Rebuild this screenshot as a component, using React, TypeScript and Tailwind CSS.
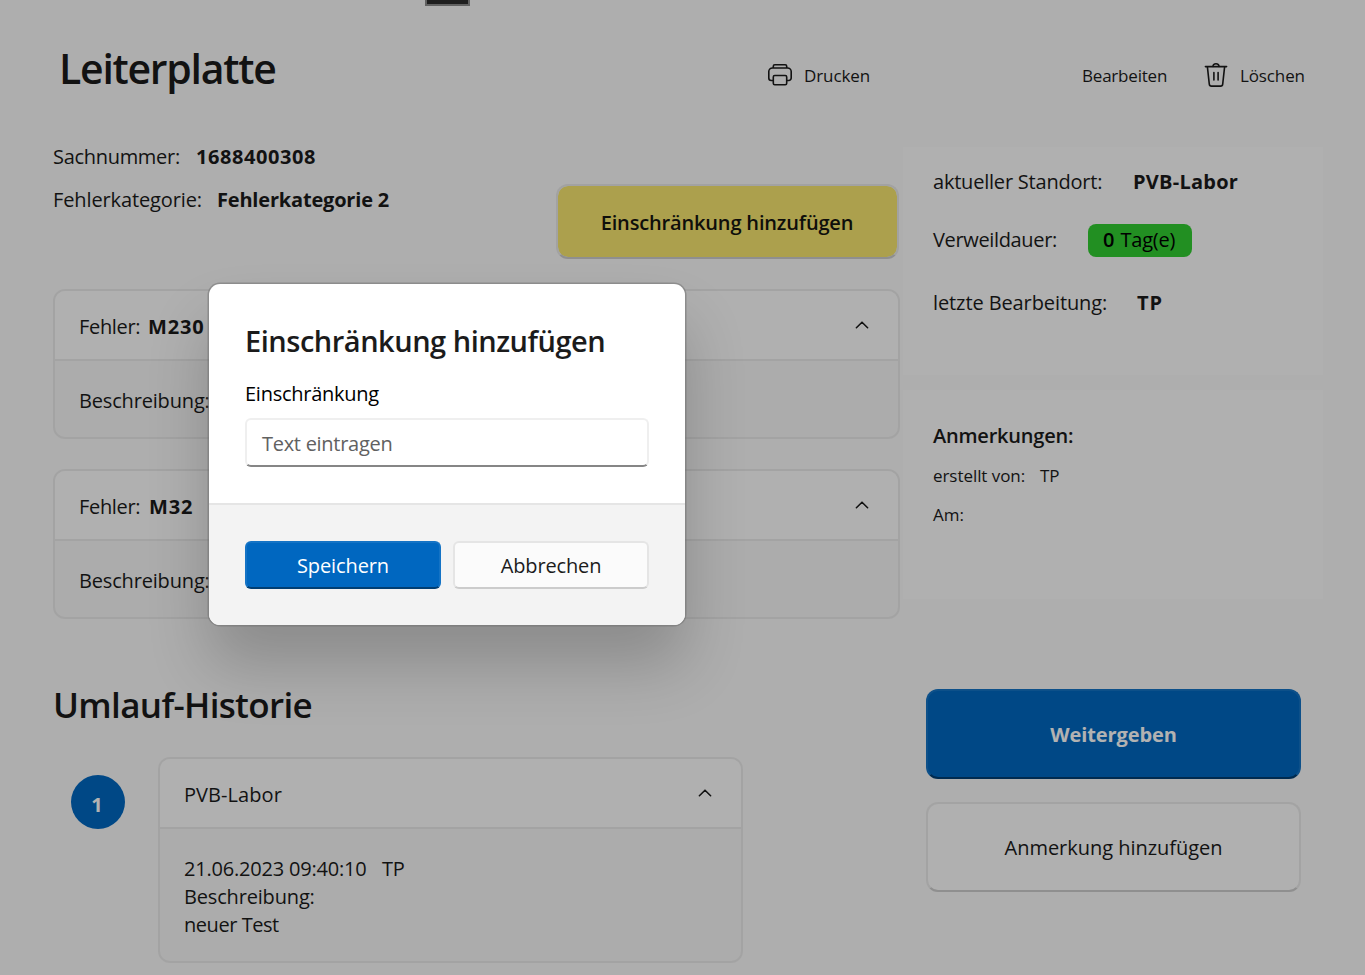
import type { ReactNode } from "react";

function PrinterIcon() {
  return (
    <svg width="26" height="26" viewBox="0 0 26 26" fill="none" stroke="#1b1b1b" strokeWidth="1.6" strokeLinejoin="round" className="block">
      <path d="M6.3 6V4.2a1.5 1.5 0 0 1 1.5-1.5h10.4a1.5 1.5 0 0 1 1.5 1.5V6" />
      <path d="M6.3 18.5H4.2a2.4 2.4 0 0 1-2.4-2.4V9.6A3.6 3.6 0 0 1 5.4 6h15.2a3.6 3.6 0 0 1 3.6 3.6v6.5a2.4 2.4 0 0 1-2.4 2.4h-2.1" />
      <rect x="6.3" y="13.5" width="13.4" height="9.2" rx="1.4" />
    </svg>
  );
}

function TrashIcon() {
  return (
    <svg width="24" height="26" viewBox="0 0 24 26" fill="none" stroke="#1b1b1b" strokeWidth="1.6" strokeLinecap="round" strokeLinejoin="round" className="block">
      <path d="M1.4 4.6h21.2" />
      <path d="M9 4.4a3 2.7 0 0 1 6 0" />
      <path d="M3.4 4.8l1.9 17.4a2.1 2.1 0 0 0 2.1 1.9h9.2a2.1 2.1 0 0 0 2.1-1.9l1.9-17.4" />
      <path d="M9.9 10.6v7.4M14.1 10.6v7.4" />
    </svg>
  );
}

function ChevronUp() {
  return (
    <svg width="14" height="8" viewBox="0 0 14 8" fill="none" stroke="#1b1b1b" strokeWidth="1.6" strokeLinecap="round" strokeLinejoin="round" className="block">
      <path d="M1.4 6.7L7 1.2l5.6 5.5" />
    </svg>
  );
}

function Expander({ header, children, className }: { header: ReactNode; children: ReactNode; className: string }) {
  return (
    <div className={`flex flex-col overflow-hidden rounded-xl border-2 border-[#eaeaea] bg-[#f7f7f7] ${className}`}>
      <div className="flex h-[70px] shrink-0 items-start justify-between border-b-2 border-[#eaeaea] bg-[#fcfcfc] pt-[22px] pr-[29px] pl-6">
        <div className="flex">{header}</div>
        <div className="pt-2">
          <ChevronUp />
        </div>
      </div>
      <div className="flex flex-col pt-[26px] pl-6">{children}</div>
    </div>
  );
}

function Toolbar() {
  return (
    <div className="flex pt-16 text-[17px] leading-6">
      <div className="flex w-[315px] gap-[11px]">
        <div className="-mt-0.5">
          <PrinterIcon />
        </div>
        <span className="tracking-[-0.1px]">Drucken</span>
      </div>
      <span className="w-[122px] tracking-[-0.2px]">Bearbeiten</span>
      <div className="flex gap-3">
        <div className="-mt-0.5">
          <TrashIcon />
        </div>
        <span className="tracking-[-0.12px]">Löschen</span>
      </div>
    </div>
  );
}

function Dialog() {
  return (
    <div className="absolute top-[284px] left-[209px] flex h-[341px] w-[476px] flex-col overflow-hidden rounded-[11px] bg-white shadow-[0_0_0_1.5px_rgba(110,110,110,0.5),0_40px_62px_rgba(0,0,0,0.2)]">
      <div className="flex h-[221px] flex-col border-b-2 border-[#e5e5e5] px-9 pt-9">
        <h2 className="h-[62px] text-[29px] leading-[42px] font-semibold tracking-[-0.48px] whitespace-nowrap">Einschränkung hinzufügen</h2>
        <label className="h-[36px] text-[20px] leading-6 tracking-[-0.26px] text-black">Einschränkung</label>
        <div className="h-[49px] rounded-md border-2 border-[#efefef] border-b-[#868686] pt-[10px] pl-[15px] text-[20px] leading-7 tracking-[-0.28px] text-[#616161]">
          Text eintragen
        </div>
      </div>
      <div className="flex flex-1 gap-3 bg-[#f3f3f3] px-9 pt-9 text-[20px] leading-7">
        <button className="h-12 flex-1 rounded-md border-2 border-[#1473c5] border-b-[#003e73] bg-[#0067c0] pt-0.5 tracking-[-0.1px] text-white">Speichern</button>
        <button className="h-12 flex-1 rounded-md border-2 border-[#e5e5e5] border-b-[#cccccc] bg-[#fbfbfb] pt-0.5 tracking-[-0.15px]">Abbrechen</button>
      </div>
    </div>
  );
}

export default function App() {
  return (
    <div className="relative h-[975px] w-[1365px] overflow-hidden bg-[#f9f9f9] font-['Open_Sans','Noto_Sans',sans-serif] text-[20px] leading-7 text-[#1b1b1b]">
      <div className="absolute top-0 left-[425px] h-1.5 w-[45px] border-2 border-t-0 border-[#8c8c8c] bg-[#2b2b2b]" />

      <header className="flex h-[143px] pl-[59px]">
        <h1 className="w-[708px] pt-10 text-[41px] leading-[56px] font-semibold tracking-[-1.26px]">Leiterplatte</h1>
        <Toolbar />
      </header>

      <main className="flex pl-[53px]">
        <div className="w-[850px]">
          <section className="flex h-[146px] justify-between pr-1">
            <div className="flex flex-col gap-[15px]">
              <div className="flex">
                <span className="w-[143px] tracking-[-0.3px]">Sachnummer:</span>
                <span className="font-bold tracking-[0.56px]">1688400308</span>
              </div>
              <div className="flex">
                <span className="w-[164px] tracking-[-0.12px]">Fehlerkategorie:</span>
                <span className="font-bold tracking-[-0.19px]">Fehlerkategorie 2</span>
              </div>
            </div>
            <button className="mt-[41px] h-[75px] w-[343px] rounded-xl border-2 border-[#e8e8e8] border-b-[#cdcdcd] bg-[#f6e66f] bg-clip-padding pt-0.5 pr-px font-semibold tracking-[-0.16px] text-[#151510]">
              Einschränkung hinzufügen
            </button>
          </section>

          <div className="flex flex-col gap-[30px]">
            <Expander
              className="h-[150px] w-[847px]"
              header={
                <>
                  <span className="w-[69px] tracking-[-0.32px]">Fehler:</span>
                  <span className="font-bold tracking-[0.8px]">M230</span>
                </>
              }
            >
              <span className="tracking-[-0.17px]">Beschreibung:</span>
            </Expander>
            <Expander
              className="h-[150px] w-[847px]"
              header={
                <>
                  <span className="w-[70px] tracking-[-0.32px]">Fehler:</span>
                  <span className="font-bold tracking-[0.9px]">M32</span>
                </>
              }
            >
              <span className="tracking-[-0.17px]">Beschreibung:</span>
            </Expander>
          </div>

          <h2 className="mt-[62px] h-[76px] text-[35px] leading-[48px] font-semibold tracking-[-0.66px]">Umlauf-Historie</h2>

          <div className="flex pl-[18px]">
            <div className="mt-[18px] mr-[33px] flex size-[54px] items-center justify-center rounded-full bg-[#0067c0] pt-[5px] pr-0.5 font-bold text-white">1</div>
            <Expander className="h-[206px] w-[585px]" header={<span className="tracking-[0.07px]">PVB-Labor</span>}>
              <div className="flex">
                <span className="w-[198px] tracking-[-0.2px]">21.06.2023 09:40:10</span>
                <span className="tracking-[-0.2px]">TP</span>
              </div>
              <span className="tracking-[-0.17px]">Beschreibung:</span>
              <span className="tracking-[-0.45px]">neuer Test</span>
            </Expander>
          </div>
        </div>

        <aside className="flex w-[420px] flex-col pt-1">
          <section className="h-[228px] bg-[#fcfcfc] pt-[21px] pl-[30px]">
            <div className="flex h-[56px]">
              <span className="w-[200px] tracking-[-0.21px]">aktueller Standort:</span>
              <span className="font-bold tracking-[0.25px]">PVB-Labor</span>
            </div>
            <div className="flex h-[65px]">
              <span className="w-[155px] pt-0.5 tracking-[-0.35px]">Verweildauer:</span>
              <div className="flex h-[33px] w-[104px] gap-1.5 rounded-lg bg-[#32cd32] pt-0.5 pl-[15px] text-black">
                <span className="font-semibold">0</span>
                <span className="tracking-[-0.2px]">Tag(e)</span>
              </div>
            </div>
            <div className="flex">
              <span className="w-[204px] tracking-[-0.1px]">letzte Bearbeitung:</span>
              <span className="font-bold tracking-[1px]">TP</span>
            </div>
          </section>

          <section className="mt-[15px] flex h-[209px] flex-col bg-[#fcfcfc] pt-8 pl-[30px]">
            <h3 className="h-[42px] font-semibold tracking-[-0.22px]">Anmerkungen:</h3>
            <div className="flex h-[39px] text-[17px] leading-6">
              <span className="w-[107px] tracking-[-0.06px]">erstellt von:</span>
              <span className="tracking-[-0.2px]">TP</span>
            </div>
            <span className="text-[17px] leading-6 tracking-[-0.05px]">Am:</span>
          </section>

          <div className="flex flex-col gap-6 pt-[90px] pr-[22px] pl-[23px]">
            <button className="h-[90px] rounded-xl border-2 border-[#1473c5] border-b-[#003e73] bg-[#0067c0] pt-0.5 font-bold tracking-[-0.08px] text-white">Weitergeben</button>
            <button className="-mt-px h-[90px] rounded-xl border-2 border-[#eaeaea] border-b-[#cdcdcd] bg-[#fcfcfc] pt-0.5 tracking-[-0.03px]">Anmerkung hinzufügen</button>
          </div>
        </aside>
      </main>

      <div className="absolute inset-0 bg-black/30" />
      <Dialog />
    </div>
  );
}
